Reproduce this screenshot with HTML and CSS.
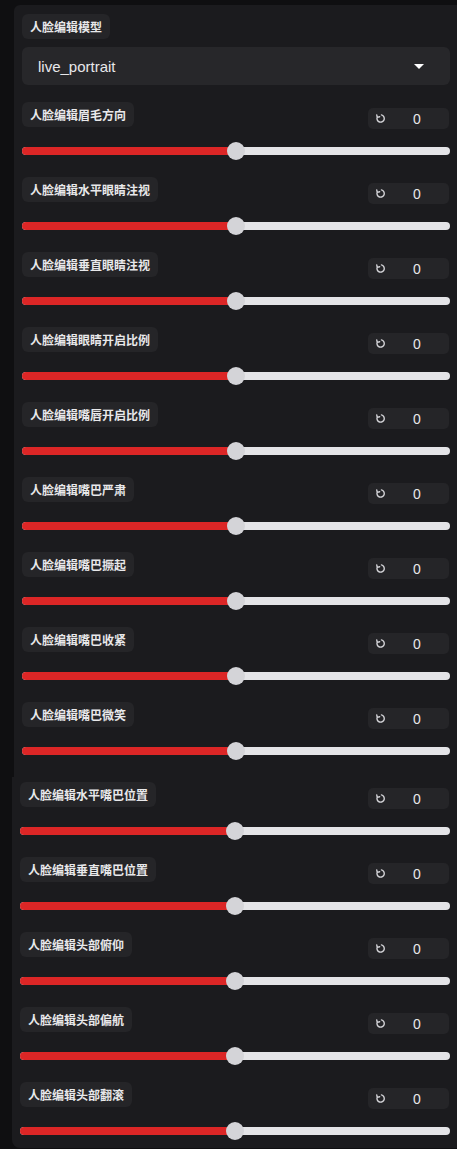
FILE: index.html
```html
<!DOCTYPE html>
<html lang="zh-CN">
<head>
  <meta charset="UTF-8" />
  <meta name="viewport" content="width=device-width, initial-scale=1.0"/>
  <title>人脸编辑</title>
  <link rel="stylesheet" href="styles.css">
</head>
<body>

  <!-- Model + first block of sliders -->
  <div class="panel top">
    <div class="field">
      <span class="chip">人脸编辑模型</span>
      <div class="dropdown">
        <span>live_portrait</span>
        <span class="caret"></span>
      </div>
    </div>

    <div class="row">
      <div class="row-head">
        <span class="chip">人脸编辑眉毛方向</span>
        <div class="numbox"><svg class="reset" viewBox="0 0 12 12"><path d="M7 2.1 A4 4 0 1 1 2.4 4.6 M1.9 2 L2.4 4.8 L5.1 4.1"/></svg><span class="value">0</span></div>
      </div>
      <div class="slider"><div class="fill" style="width: 50%"></div><div class="thumb" style="left: 50%"></div></div>
    </div>

    <div class="row">
      <div class="row-head">
        <span class="chip">人脸编辑水平眼睛注视</span>
        <div class="numbox"><svg class="reset" viewBox="0 0 12 12"><path d="M7 2.1 A4 4 0 1 1 2.4 4.6 M1.9 2 L2.4 4.8 L5.1 4.1"/></svg><span class="value">0</span></div>
      </div>
      <div class="slider"><div class="fill" style="width: 50%"></div><div class="thumb" style="left: 50%"></div></div>
    </div>

    <div class="row">
      <div class="row-head">
        <span class="chip">人脸编辑垂直眼睛注视</span>
        <div class="numbox"><svg class="reset" viewBox="0 0 12 12"><path d="M7 2.1 A4 4 0 1 1 2.4 4.6 M1.9 2 L2.4 4.8 L5.1 4.1"/></svg><span class="value">0</span></div>
      </div>
      <div class="slider"><div class="fill" style="width: 50%"></div><div class="thumb" style="left: 50%"></div></div>
    </div>

    <div class="row">
      <div class="row-head">
        <span class="chip">人脸编辑眼睛开启比例</span>
        <div class="numbox"><svg class="reset" viewBox="0 0 12 12"><path d="M7 2.1 A4 4 0 1 1 2.4 4.6 M1.9 2 L2.4 4.8 L5.1 4.1"/></svg><span class="value">0</span></div>
      </div>
      <div class="slider"><div class="fill" style="width: 50%"></div><div class="thumb" style="left: 50%"></div></div>
    </div>

    <div class="row">
      <div class="row-head">
        <span class="chip">人脸编辑嘴唇开启比例</span>
        <div class="numbox"><svg class="reset" viewBox="0 0 12 12"><path d="M7 2.1 A4 4 0 1 1 2.4 4.6 M1.9 2 L2.4 4.8 L5.1 4.1"/></svg><span class="value">0</span></div>
      </div>
      <div class="slider"><div class="fill" style="width: 50%"></div><div class="thumb" style="left: 50%"></div></div>
    </div>

    <div class="row">
      <div class="row-head">
        <span class="chip">人脸编辑嘴巴严肃</span>
        <div class="numbox"><svg class="reset" viewBox="0 0 12 12"><path d="M7 2.1 A4 4 0 1 1 2.4 4.6 M1.9 2 L2.4 4.8 L5.1 4.1"/></svg><span class="value">0</span></div>
      </div>
      <div class="slider"><div class="fill" style="width: 50%"></div><div class="thumb" style="left: 50%"></div></div>
    </div>

    <div class="row">
      <div class="row-head">
        <span class="chip">人脸编辑嘴巴撅起</span>
        <div class="numbox"><svg class="reset" viewBox="0 0 12 12"><path d="M7 2.1 A4 4 0 1 1 2.4 4.6 M1.9 2 L2.4 4.8 L5.1 4.1"/></svg><span class="value">0</span></div>
      </div>
      <div class="slider"><div class="fill" style="width: 50%"></div><div class="thumb" style="left: 50%"></div></div>
    </div>

    <div class="row">
      <div class="row-head">
        <span class="chip">人脸编辑嘴巴收紧</span>
        <div class="numbox"><svg class="reset" viewBox="0 0 12 12"><path d="M7 2.1 A4 4 0 1 1 2.4 4.6 M1.9 2 L2.4 4.8 L5.1 4.1"/></svg><span class="value">0</span></div>
      </div>
      <div class="slider"><div class="fill" style="width: 50%"></div><div class="thumb" style="left: 50%"></div></div>
    </div>

    <div class="row">
      <div class="row-head">
        <span class="chip">人脸编辑嘴巴微笑</span>
        <div class="numbox"><svg class="reset" viewBox="0 0 12 12"><path d="M7 2.1 A4 4 0 1 1 2.4 4.6 M1.9 2 L2.4 4.8 L5.1 4.1"/></svg><span class="value">0</span></div>
      </div>
      <div class="slider"><div class="fill" style="width: 50%"></div><div class="thumb" style="left: 50%"></div></div>
    </div>
  </div>

  <!-- Mouth / head sliders -->
  <div class="panel bottom">
    <div class="row">
      <div class="row-head">
        <span class="chip">人脸编辑水平嘴巴位置</span>
        <div class="numbox"><svg class="reset" viewBox="0 0 12 12"><path d="M7 2.1 A4 4 0 1 1 2.4 4.6 M1.9 2 L2.4 4.8 L5.1 4.1"/></svg><span class="value">0</span></div>
      </div>
      <div class="slider"><div class="fill" style="width: 50%"></div><div class="thumb" style="left: 50%"></div></div>
    </div>

    <div class="row">
      <div class="row-head">
        <span class="chip">人脸编辑垂直嘴巴位置</span>
        <div class="numbox"><svg class="reset" viewBox="0 0 12 12"><path d="M7 2.1 A4 4 0 1 1 2.4 4.6 M1.9 2 L2.4 4.8 L5.1 4.1"/></svg><span class="value">0</span></div>
      </div>
      <div class="slider"><div class="fill" style="width: 50%"></div><div class="thumb" style="left: 50%"></div></div>
    </div>

    <div class="row">
      <div class="row-head">
        <span class="chip">人脸编辑头部俯仰</span>
        <div class="numbox"><svg class="reset" viewBox="0 0 12 12"><path d="M7 2.1 A4 4 0 1 1 2.4 4.6 M1.9 2 L2.4 4.8 L5.1 4.1"/></svg><span class="value">0</span></div>
      </div>
      <div class="slider"><div class="fill" style="width: 50%"></div><div class="thumb" style="left: 50%"></div></div>
    </div>

    <div class="row">
      <div class="row-head">
        <span class="chip">人脸编辑头部偏航</span>
        <div class="numbox"><svg class="reset" viewBox="0 0 12 12"><path d="M7 2.1 A4 4 0 1 1 2.4 4.6 M1.9 2 L2.4 4.8 L5.1 4.1"/></svg><span class="value">0</span></div>
      </div>
      <div class="slider"><div class="fill" style="width: 50%"></div><div class="thumb" style="left: 50%"></div></div>
    </div>

    <div class="row">
      <div class="row-head">
        <span class="chip">人脸编辑头部翻滚</span>
        <div class="numbox"><svg class="reset" viewBox="0 0 12 12"><path d="M7 2.1 A4 4 0 1 1 2.4 4.6 M1.9 2 L2.4 4.8 L5.1 4.1"/></svg><span class="value">0</span></div>
      </div>
      <div class="slider"><div class="fill" style="width: 50%"></div><div class="thumb" style="left: 50%"></div></div>
    </div>
  </div>

</body>
</html>
```

FILE: styles.css
```css
:root {
  --page-bg: #0f0f11;
  --panel-bg: #1b1b1e;
  --chip-bg: #252528;
  --input-bg: #27272a;
  --text-color: #e8e8ea;
  --fill: #dc2626;
  --track: #e4e4e7;
  --thumb: #d4d4d8;
}

body {
  margin: 0;
  background-color: var(--page-bg);
  color: var(--text-color);
  font-family: "Liberation Sans", "Noto Sans CJK SC", sans-serif;
}

.panel {
  background-color: var(--panel-bg);
  display: flex;
  flex-direction: column;
  gap: 17px;
  padding: 0 7px 0 8px;
}

.panel.top {
  margin: 5px 0 0 14px;
  padding-top: 9px;
  padding-bottom: 17px;
  border-radius: 6px 0 0 0;
}

.panel.bottom {
  margin-left: 12px;
  padding-top: 5px;
  padding-bottom: 8px;
  border-radius: 0 0 0 8px;
}

.field {
  display: flex;
  flex-direction: column;
  align-items: flex-start;
  gap: 8px;
}

.chip {
  display: inline-block;
  background-color: var(--chip-bg);
  border-radius: 6px;
  padding: 5px 8px;
  font-family: "Noto Sans CJK SC", sans-serif;
  font-size: 12px;
  font-weight: 700;
  line-height: 15px;
}

.dropdown {
  align-self: stretch;
  height: 38px;
  box-sizing: border-box;
  background-color: var(--input-bg);
  border-radius: 6px;
  padding: 0 26px 0 16px;
  display: flex;
  align-items: center;
  justify-content: space-between;
  font-size: 15px;
}

.caret {
  width: 0;
  height: 0;
  border-left: 5px solid transparent;
  border-right: 5px solid transparent;
  border-top: 5px solid #fff;
}

.row {
  display: flex;
  flex-direction: column;
}

.row-head {
  display: flex;
  justify-content: space-between;
  align-items: flex-start;
}

.numbox {
  width: 81px;
  height: 21px;
  margin: 6px 1px 0 0;
  background-color: var(--chip-bg);
  border-radius: 5px;
  display: flex;
  align-items: center;
  padding-left: 7px;
  box-sizing: border-box;
}

.reset {
  width: 11px;
  height: 11px;
  fill: none;
  stroke: #d4d4d8;
  stroke-width: 1.5;
  stroke-linecap: round;
  stroke-linejoin: round;
}

.value {
  flex: 1;
  text-align: center;
  font-size: 14px;
  padding-right: 1px;
}

.slider {
  position: relative;
  height: 18px;
  margin-top: 13px;
  display: flex;
  align-items: center;
}

.slider::before {
  content: "";
  position: absolute;
  left: 0;
  right: 0;
  height: 8px;
  border-radius: 4px;
  background-color: var(--track);
}

.fill {
  position: relative;
  height: 8px;
  border-radius: 4px 0 0 4px;
  background-color: var(--fill);
}

.thumb {
  position: absolute;
  top: 0;
  width: 18px;
  height: 18px;
  margin-left: -9px;
  border-radius: 50%;
  background-color: var(--thumb);
}
```
